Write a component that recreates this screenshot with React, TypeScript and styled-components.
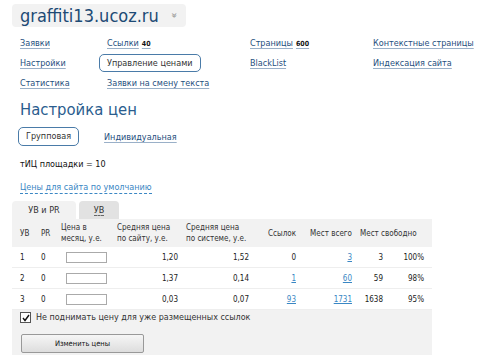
import React from 'react';
import styled, { createGlobalStyle } from 'styled-components';

const GlobalStyle = createGlobalStyle`
  body {
    margin: 0;
    background: #ffffff;
    font-family: 'DejaVu Sans Condensed', 'DejaVu Sans', Verdana, sans-serif;
    font-stretch: condensed;
    font-size: 9px;
    color: #222222;
  }
`;

const Page = styled.div`
  width: 500px;
  height: 362px;
  padding: 4px 0 0 12px;
  box-sizing: border-box;
  overflow: hidden;
`;

const SiteBox = styled.div`
  display: inline-flex;
  align-items: center;
  gap: 13px;
  height: 23px;
  padding: 0 9px 0 8px;
  background: #f2f2f2;
  border-radius: 4px;
`;

const SiteName = styled.div`
  font-size: 18px;
  color: #1d4a75;
`;

const SiteArrow = styled.span`
  font-size: 10px;
  color: #888888;
  transform: rotate(90deg);
  display: inline-block;
`;

const Nav = styled.div`
  display: grid;
  grid-template-columns: 87px 143px 123px 1fr;
  grid-auto-rows: 20px;
  margin: 6px 0 0 8px;
  align-items: center;
`;

const NavLink = styled.a<{ $active?: boolean }>`
  justify-self: start;
  color: #1f4f7e;
  text-decoration: ${(p) => (p.$active ? 'none' : 'underline')};
  text-decoration-color: #9ab0c8;
  text-underline-offset: 2px;
  ${(p) =>
    p.$active &&
    `
    border: 1px solid #4a7ba8;
    border-radius: 5px;
    padding: 3px 7px;
    margin-left: -8px;
    color: #333;
  `}
`;

const Count = styled.span`
  font-size: 7px;
  font-weight: bold;
  color: #111;
  margin-left: 3px;
`;

const Heading = styled.h1`
  font-size: 16.5px;
  font-weight: normal;
  line-height: 20px;
  color: #2a5d8e;
  margin: 7px 0 0 8px;
`;

const ModeRow = styled.div`
  display: flex;
  align-items: center;
  gap: 25px;
  margin: 7px 0 0 6px;
`;

const ModeButton = styled.div`
  border: 1px solid #4a7ba8;
  border-radius: 5px;
  padding: 3px 7px;
  line-height: 11px;
  color: #333;
`;

const ModeLink = styled.a`
  color: #1f4f7e;
  text-decoration: underline;
  text-decoration-color: #9ab0c8;
  text-underline-offset: 2px;
`;

const Tic = styled.div`
  margin: 12px 0 0 8px;
  line-height: 12px;
  color: #111;
`;

const DefaultLink = styled.a`
  display: inline-block;
  margin: 12px 0 0 8px;
  color: #3a87c4;
  border-bottom: 1px dashed #3a87c4;
  line-height: 11px;
`;

const Tabs = styled.div`
  display: flex;
  gap: 3px;
  margin-top: 7px;
  height: 18px;
`;

const Tab = styled.div<{ $active?: boolean }>`
  display: flex;
  align-items: center;
  justify-content: center;
  width: ${(p) => (p.$active ? '64px' : '40px')};
  background: ${(p) => (p.$active ? '#f2f2f2' : '#e2e2e2')};
  border-radius: 4px 4px 0 0;
  color: #333;
`;

const TabText = styled.span`
  border-bottom: 1px dashed #666;
  line-height: 10px;
`;

const Table = styled.table`
  width: 420px;
  table-layout: fixed;
  border-collapse: collapse;
  font-size: 8px;
`;

const Th = styled.th<{ $right?: boolean; $first?: boolean }>`
  background: #f2f2f2;
  font-weight: normal;
  color: #333;
  text-align: ${(p) => (p.$right ? 'right' : 'left')};
  padding: 3px 4px 3px ${(p) => (p.$first ? '8px' : '4px')};
  line-height: 11px;
  height: 22px;
  vertical-align: middle;
  white-space: nowrap;
`;

const Td = styled.td<{ $right?: boolean; $first?: boolean; $last?: boolean }>`
  text-align: ${(p) => (p.$right ? 'right' : 'left')};
  padding: 0 ${(p) => (p.$last ? '8px' : '4px')} 0 ${(p) => (p.$first ? '8px' : '4px')};
  height: 20px;
  border-bottom: 1px solid #eeeeee;
  color: #222;
  white-space: nowrap;
`;

const PriceInput = styled.input`
  width: 41px;
  height: 11px;
  box-sizing: border-box;
  border: 1px solid #aaaaaa;
  padding: 0;
  margin: 0 0 0 5px;
  display: block;
`;

const CellLink = styled.a`
  color: #3a87c4;
  text-decoration: underline;
`;

const Footer = styled.div`
  width: 420px;
  height: 45px;
  background: #f2f2f2;
  box-sizing: border-box;
  padding: 2px 0 0 8px;
`;

const CheckRow = styled.label`
  display: flex;
  align-items: center;
  gap: 5px;
  font-family: 'DejaVu Sans', Verdana, sans-serif;
  font-stretch: normal;
  font-size: 8px;
  color: #333;
`;

const CheckBox = styled.span`
  width: 9px;
  height: 9px;
  border: 1px solid #555;
  background: #fff;
  display: inline-flex;
  align-items: center;
  justify-content: center;
`;

const SubmitButton = styled.button`
  margin: 11px 0 0 1px;
  width: 123px;
  height: 19px;
  border: 1px solid #999;
  border-radius: 2px;
  background: linear-gradient(#f6f6f6, #dddddd);
  font-family: 'DejaVu Sans Condensed', 'DejaVu Sans', sans-serif;
  font-size: 7.5px;
  color: #111;
`;

const colWidths = [25, 20, 56, 69, 71, 47, 56, 31, 45];

const rows = [
  { uv: '1', pr: '0', site: '1,20', sys: '1,52', links: '0', total: '3', free: '3', pct: '100%', linked: false },
  { uv: '2', pr: '0', site: '1,37', sys: '0,14', links: '1', total: '60', free: '59', pct: '98%', linked: true },
  { uv: '3', pr: '0', site: '0,03', sys: '0,07', links: '93', total: '1731', free: '1638', pct: '95%', linked: true },
];

const App: React.FC = () => {
  return (
    <>
      <GlobalStyle />
      <Page>
        <SiteBox>
          <SiteName>graffiti13.ucoz.ru</SiteName>
          <SiteArrow>»</SiteArrow>
        </SiteBox>
        <Nav>
          <NavLink>Заявки</NavLink>
          <NavLink>
            Ссылки<Count>40</Count>
          </NavLink>
          <NavLink>
            Страницы<Count>600</Count>
          </NavLink>
          <NavLink>Контекстные страницы</NavLink>
          <NavLink>Настройки</NavLink>
          <NavLink $active>Управление ценами</NavLink>
          <NavLink>BlackList</NavLink>
          <NavLink>Индексация сайта</NavLink>
          <NavLink>Статистика</NavLink>
          <NavLink>Заявки на смену текста</NavLink>
        </Nav>
        <Heading>Настройка цен</Heading>
        <ModeRow>
          <ModeButton>Групповая</ModeButton>
          <ModeLink>Индивидуальная</ModeLink>
        </ModeRow>
        <Tic>тИЦ площадки = 10</Tic>
        <DefaultLink>Цены для сайта по умолчанию</DefaultLink>
        <Tabs>
          <Tab $active>УВ и PR</Tab>
          <Tab>
            <TabText>УВ</TabText>
          </Tab>
        </Tabs>
        <Table>
          <colgroup>
            {colWidths.map((w, i) => (
              <col key={i} style={{ width: w }} />
            ))}
          </colgroup>
          <thead>
            <tr>
              <Th $first>УВ</Th>
              <Th>PR</Th>
              <Th>
                Цена в<br />месяц, у.е.
              </Th>
              <Th>
                Средняя цена<br />по сайту, у.е.
              </Th>
              <Th>
                Средняя цена<br />по системе, у.е.
              </Th>
              <Th $right>Ссылок</Th>
              <Th $right>Мест всего</Th>
              <Th colSpan={2}>Мест свободно</Th>
            </tr>
          </thead>
          <tbody>
            {rows.map((r) => (
              <tr key={r.uv}>
                <Td $first>{r.uv}</Td>
                <Td>{r.pr}</Td>
                <Td>
                  <PriceInput />
                </Td>
                <Td $right>{r.site}</Td>
                <Td $right>{r.sys}</Td>
                <Td $right>{r.linked ? <CellLink>{r.links}</CellLink> : r.links}</Td>
                <Td $right>
                  <CellLink>{r.total}</CellLink>
                </Td>
                <Td $right>{r.free}</Td>
                <Td $right $last>
                  {r.pct}
                </Td>
              </tr>
            ))}
          </tbody>
        </Table>
        <Footer>
          <CheckRow>
            <CheckBox>
              <svg width="8" height="8" viewBox="0 0 8 8">
                <path d="M1 4 L3 6.5 L7 1" stroke="#111" strokeWidth="1.4" fill="none" />
              </svg>
            </CheckBox>
            Не поднимать цену для уже размещенных ссылок
          </CheckRow>
          <SubmitButton>Изменить цены</SubmitButton>
        </Footer>
      </Page>
    </>
  );
};

export default App;
